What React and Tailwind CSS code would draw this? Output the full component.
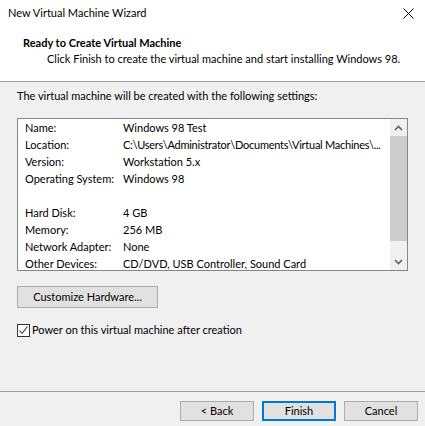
import React from "react";

const rows = [
  ["Name:", "Windows 98 Test"],
  ["Location:", "C:\\Users\\Administrator\\Documents\\Virtual Machines\\..."],
  ["Version:", "Workstation 5.x"],
  ["Operating System:", "Windows 98"],
  ["", ""],
  ["Hard Disk:", "4 GB"],
  ["Memory:", "256 MB"],
  ["Network Adapter:", "None"],
  ["Other Devices:", "CD/DVD, USB Controller, Sound Card"],
];

function Btn({ children, className = "" }) {
  return (
    <div
      className={
        "flex items-center justify-center bg-[#e1e1e1] border border-[#adadad] text-[11px] text-black " +
        className
      }
    >
      {children}
    </div>
  );
}

export default function App() {
  return (
    <div
      className="w-[425px] h-[426px] flex flex-col bg-[#f0f0f0] text-black overflow-hidden"
      style={{ fontFamily: 'Lato, "Noto Sans", sans-serif' }}
    >
      {/* header */}
      <div className="bg-white h-[81px] flex flex-col shrink-0">
        <div className="h-[26px] flex items-center justify-between pl-[8px] pr-[11px] text-[11px]">
          <span>New Virtual Machine Wizard</span>
          <svg width="11" height="11" viewBox="0 0 11 11" className="mt-[1px]">
            <path d="M0.5 0.5L10.5 10.5M10.5 0.5L0.5 10.5" stroke="#000" strokeWidth="1" />
          </svg>
        </div>
        <div className="pl-[23px] pt-[9px] text-[11px] leading-[16px] whitespace-nowrap">
          <div className="font-bold">Ready to Create Virtual Machine</div>
          <div className="pl-[24px]">Click Finish to create the virtual machine and start installing Windows 98.</div>
        </div>
      </div>
      <div className="h-px bg-[#a0a0a0] shrink-0" />

      {/* body */}
      <div className="flex-1 flex flex-col px-[17px] pt-[6px] text-[11px]">
        <div className="leading-[16px]">The virtual machine will be created with the following settings:</div>
        <div className="mt-[14px] h-[153px] border border-[#828790] bg-white flex overflow-hidden">
          <div className="flex-1 flex flex-col pl-[7px] overflow-hidden">
            {rows.map(([k, v], i) => (
              <div key={i} className="h-[17px] shrink-0 flex items-center leading-[17px] whitespace-nowrap">
                <span className="w-[98px] shrink-0">{k}</span>
                <span className={i === 1 ? "tracking-[-0.25px]" : ""}>{v}</span>
              </div>
            ))}
          </div>
          <div className="w-[17px] shrink-0 flex flex-col bg-[#f0f0f0]">
            <div className="h-[17px] flex items-center justify-center">
              <svg width="9" height="6" viewBox="0 0 9 6">
                <path d="M1 5L4.5 1.5L8 5" stroke="#606060" strokeWidth="1.6" fill="none" />
              </svg>
            </div>
            <div className="h-[105px] bg-[#cdcdcd]" />
            <div className="flex-1" />
            <div className="h-[17px] flex items-center justify-center">
              <svg width="9" height="6" viewBox="0 0 9 6">
                <path d="M1 1L4.5 4.5L8 1" stroke="#606060" strokeWidth="1.6" fill="none" />
              </svg>
            </div>
          </div>
        </div>
        <Btn className="mt-[15px] w-[141px] h-[22px]">Customize Hardware...</Btn>
        <div className="mt-[14px] flex items-center gap-[2px]">
          <div className="w-[13px] h-[13px] border border-[#333333] bg-white flex items-center justify-center">
            <svg width="11" height="11" viewBox="0 0 11 11">
              <path d="M1.5 5.5L4 8.5L9.5 1.5" stroke="#333" strokeWidth="1.1" fill="none" />
            </svg>
          </div>
          <span className="leading-[16px]">Power on this virtual machine after creation</span>
        </div>
      </div>

      {/* footer */}
      <div className="h-px bg-[#a0a0a0] shrink-0" />
      <div className="h-[34px] shrink-0 flex justify-end items-start gap-[8px] pr-[7px] pt-[9px]">
        <Btn className="w-[74px] h-[20px]">&lt; Back</Btn>
        <div className="w-[74px] h-[20px] flex items-center justify-center bg-[#e1e1e1] border-2 border-[#0078d7] text-[11px]">
          Finish
        </div>
        <Btn className="w-[74px] h-[20px]">Cancel</Btn>
      </div>
    </div>
  );
}
